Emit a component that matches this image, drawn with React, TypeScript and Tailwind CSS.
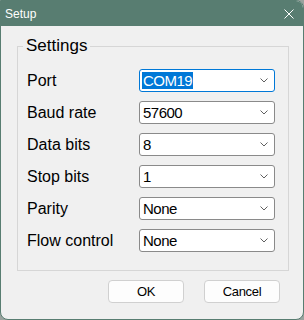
import React from "react";

const Chevron = () => (
  <svg width="8" height="5" viewBox="0 0 8 5" className="shrink-0">
    <path d="M0.5 0.5 L4 4 L7.5 0.5" fill="none" stroke="#606060" strokeWidth="1" />
  </svg>
);

const Combo = ({ value, focused }: { value: string; focused?: boolean }) => (
  <div
    className={`w-[136px] h-[23px] bg-white rounded-[3px] border flex items-center justify-between pl-[2px] pr-[6px] ${
      focused ? "border-[#0078d7]" : "border-[#8a8a8a]"
    }`}
  >
    <span
      className={`text-[15px] leading-[17px] px-[1px] tracking-[-0.5px] ${
        focused ? "bg-[#0078d7] text-white" : "text-black"
      }`}
    >
      {value}
    </span>
    <Chevron />
  </div>
);

const rows = [
  { label: "Port", value: "COM19", focused: true },
  { label: "Baud rate", value: "57600" },
  { label: "Data bits", value: "8" },
  { label: "Stop bits", value: "1" },
  { label: "Parity", value: "None" },
  { label: "Flow control", value: "None" },
];

export default function App() {
  return (
    <div className="w-[304px] h-[320px] bg-[#9aa39f]" style={{ fontFamily: '"Liberation Sans", sans-serif' }}>
      <div className="w-[304px] h-[320px] flex flex-col border border-[#587d71] rounded-tr-[8px] rounded-b-[8px] overflow-hidden bg-[#f0f0f0]">
        <div className="h-[25px] bg-[#587d71] flex items-center justify-between pl-[4px] pr-[9px] shrink-0">
          <span className="text-white text-[12px]">Setup</span>
          <svg width="10" height="10" viewBox="0 0 10 10">
            <path d="M0.5 0.5 L9.5 9.5 M9.5 0.5 L0.5 9.5" stroke="white" strokeWidth="1" />
          </svg>
        </div>
        <div className="flex-1 flex flex-col pl-[16px] pr-[15px]">
          <fieldset className="mt-[10px] w-[272px] border border-[#d6d6d6] pl-[9px] pr-[13px] pb-[18px] pt-[13px]">
            <legend className="ml-[-4px] px-[3px] text-[17px] leading-[20px] text-black">Settings</legend>
            <div className="flex flex-col gap-[9px]">
              {rows.map((r) => (
                <div key={r.label} className="flex items-center justify-between h-[23px]">
                  <span className="text-[16px] text-black">{r.label}</span>
                  <Combo value={r.value} focused={r.focused} />
                </div>
              ))}
            </div>
          </fieldset>
          <div className="flex justify-end gap-[20px] mt-[9px] pr-[8px]">
            <button className="w-[76px] h-[23px] bg-[#fdfdfd] border border-[#d0d0d0] rounded-[4px] text-[13px] tracking-[-0.3px] text-black">
              OK
            </button>
            <button className="w-[76px] h-[23px] bg-[#fdfdfd] border border-[#d0d0d0] rounded-[4px] text-[13px] tracking-[-0.3px] text-black">
              Cancel
            </button>
          </div>
        </div>
      </div>
    </div>
  );
}
